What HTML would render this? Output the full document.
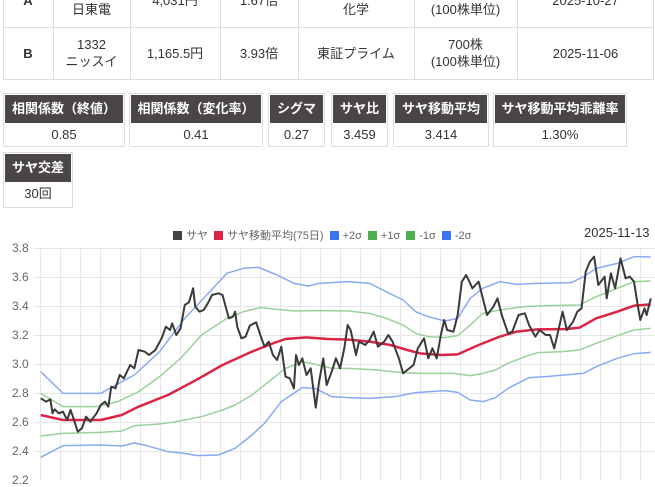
<!DOCTYPE html>
<html><head><meta charset="utf-8"><style>
body{margin:0;width:655px;height:480px;overflow:hidden;background:#fff;font-family:"Liberation Sans","Noto Sans CJK JP",sans-serif;color:#333;position:relative}
.a{position:absolute}
.t{position:absolute;border-collapse:collapse;font-size:13px}
.c{position:absolute;text-align:center;font-size:13px;line-height:17px;display:flex;align-items:center;justify-content:center;flex-direction:column}
.bx{position:absolute;border:1px solid #ddd;box-sizing:border-box;font-size:13px;text-align:center}
.bx .h{background:#4a4546;color:#fff;font-weight:bold;height:28px;line-height:28px;margin:1px 1px 0 1px;font-size:13px;white-space:nowrap}
.bx .v{line-height:24px}
.lg{font-size:11px;color:#666}
.lg i{display:inline-block;width:9px;height:9px;margin:0 4px 0 6px;vertical-align:-1px}
</style></head><body>
<!-- top table -->
<div class="a" style="left:3px;top:-2px;width:651px;height:82px;border:1px solid #ddd;border-top:none;box-sizing:border-box"></div>
<div class="a" style="left:3px;top:27px;width:651px;height:1px;background:#ddd"></div>
<div class="a" style="left:53px;top:0;width:1px;height:79px;background:#ddd"></div>
<div class="a" style="left:130px;top:0;width:1px;height:79px;background:#ddd"></div>
<div class="a" style="left:220px;top:0;width:1px;height:79px;background:#ddd"></div>
<div class="a" style="left:298px;top:0;width:1px;height:79px;background:#ddd"></div>
<div class="a" style="left:414px;top:0;width:1px;height:79px;background:#ddd"></div>
<div class="a" style="left:517px;top:0;width:1px;height:79px;background:#ddd"></div>
<div class="c" style="left:3px;top:-8px;width:50px;height:17px;font-weight:bold">A</div>
<div class="c" style="left:53px;top:-16px;width:77px;height:34px"><div>7751</div><div>日東電</div></div>
<div class="c" style="left:130px;top:-8px;width:90px;height:17px">4,031円</div>
<div class="c" style="left:220px;top:-8px;width:78px;height:17px">1.67倍</div>
<div class="c" style="left:298px;top:-16px;width:116px;height:34px"><div>&nbsp;</div><div>化学</div></div>
<div class="c" style="left:414px;top:-16px;width:103px;height:34px"><div>700株</div><div>(100株単位)</div></div>
<div class="c" style="left:517px;top:-8px;width:137px;height:17px">2025-10-27</div>
<div class="c" style="left:3px;top:27px;width:50px;height:52px;font-weight:bold">B</div>
<div class="c" style="left:53px;top:27px;width:77px;height:52px"><div>1332</div><div>ニッスイ</div></div>
<div class="c" style="left:130px;top:27px;width:90px;height:52px">1,165.5円</div>
<div class="c" style="left:220px;top:27px;width:78px;height:52px">3.93倍</div>
<div class="c" style="left:298px;top:27px;width:116px;height:52px">東証プライム</div>
<div class="c" style="left:414px;top:27px;width:103px;height:52px"><div>700株</div><div>(100株単位)</div></div>
<div class="c" style="left:517px;top:27px;width:137px;height:52px">2025-11-06</div>
<!-- stat boxes -->
<div class="bx" style="left:3px;top:93px;width:122px;height:54px"><div class="h">相関係数（終値）</div><div class="v">0.85</div></div>
<div class="bx" style="left:129px;top:93px;width:134px;height:54px"><div class="h">相関係数（変化率）</div><div class="v">0.41</div></div>
<div class="bx" style="left:268px;top:93px;width:57px;height:54px"><div class="h">シグマ</div><div class="v">0.27</div></div>
<div class="bx" style="left:331px;top:93px;width:57px;height:54px"><div class="h">サヤ比</div><div class="v">3.459</div></div>
<div class="bx" style="left:393px;top:93px;width:96px;height:54px"><div class="h">サヤ移動平均</div><div class="v">3.414</div></div>
<div class="bx" style="left:493px;top:93px;width:134px;height:54px"><div class="h">サヤ移動平均乖離率</div><div class="v">1.30%</div></div>
<div class="bx" style="left:3px;top:152px;width:70px;height:56px"><div class="h">サヤ交差</div><div class="v">30回</div></div>
<!-- legend -->
<div class="a lg" style="left:167px;top:227px;white-space:nowrap"><i style="background:#444"></i>サヤ<i style="background:#dc2446"></i>サヤ移動平均(75日)<i style="background:#3b73f5"></i>+2σ<i style="background:#4caf50"></i>+1σ<i style="background:#4caf50"></i>-1σ<i style="background:#3b73f5"></i>-2σ</div>
<div class="a" style="left:584px;top:225px;font-size:13px;color:#333">2025-11-13</div>
<!-- y labels -->
<div class="a" style="left:12px;top:241px;font-size:12px;color:#666;line-height:14px">
<div style="position:absolute;top:0">3.8</div><div style="position:absolute;top:29px">3.6</div><div style="position:absolute;top:58px">3.4</div><div style="position:absolute;top:87px">3.2</div><div style="position:absolute;top:116px">3.0</div><div style="position:absolute;top:145px">2.8</div><div style="position:absolute;top:174px">2.6</div><div style="position:absolute;top:203px">2.4</div><div style="position:absolute;top:232px">2.2</div></div>
<svg class="a" style="left:0;top:0" width="655" height="480">
<g stroke="#e6e6e6" stroke-width="1">
<line x1="34" y1="248.5" x2="655" y2="248.5"/><line x1="34" y1="277.5" x2="655" y2="277.5"/><line x1="34" y1="306.5" x2="655" y2="306.5"/><line x1="34" y1="335.5" x2="655" y2="335.5"/><line x1="34" y1="364.5" x2="655" y2="364.5"/><line x1="34" y1="393.5" x2="655" y2="393.5"/><line x1="34" y1="422.5" x2="655" y2="422.5"/><line x1="34" y1="451.5" x2="655" y2="451.5"/>
<line x1="40.5" y1="248" x2="40.5" y2="480"/><line x1="60.5" y1="248" x2="60.5" y2="480"/><line x1="80.5" y1="248" x2="80.5" y2="480"/><line x1="100.5" y1="248" x2="100.5" y2="480"/><line x1="120.5" y1="248" x2="120.5" y2="480"/><line x1="140.5" y1="248" x2="140.5" y2="480"/><line x1="160.5" y1="248" x2="160.5" y2="480"/><line x1="180.5" y1="248" x2="180.5" y2="480"/><line x1="200.5" y1="248" x2="200.5" y2="480"/><line x1="220.5" y1="248" x2="220.5" y2="480"/><line x1="240.5" y1="248" x2="240.5" y2="480"/><line x1="260.5" y1="248" x2="260.5" y2="480"/><line x1="280.5" y1="248" x2="280.5" y2="480"/><line x1="300.5" y1="248" x2="300.5" y2="480"/><line x1="320.5" y1="248" x2="320.5" y2="480"/><line x1="340.5" y1="248" x2="340.5" y2="480"/><line x1="360.5" y1="248" x2="360.5" y2="480"/><line x1="380.5" y1="248" x2="380.5" y2="480"/><line x1="400.5" y1="248" x2="400.5" y2="480"/><line x1="420.5" y1="248" x2="420.5" y2="480"/><line x1="440.5" y1="248" x2="440.5" y2="480"/><line x1="460.5" y1="248" x2="460.5" y2="480"/><line x1="480.5" y1="248" x2="480.5" y2="480"/><line x1="500.5" y1="248" x2="500.5" y2="480"/><line x1="520.5" y1="248" x2="520.5" y2="480"/><line x1="540.5" y1="248" x2="540.5" y2="480"/><line x1="560.5" y1="248" x2="560.5" y2="480"/><line x1="580.5" y1="248" x2="580.5" y2="480"/><line x1="600.5" y1="248" x2="600.5" y2="480"/><line x1="620.5" y1="248" x2="620.5" y2="480"/><line x1="640.5" y1="248" x2="640.5" y2="480"/>
</g></svg>
<svg class="a" style="left:0;top:215px" width="655" height="265" viewBox="0 0 1560 795" preserveAspectRatio="none">
<g fill="none" stroke-linejoin="round" vector-effect="non-scaling-stroke">
<polyline vector-effect="non-scaling-stroke" stroke="#8aa8f5" stroke-width="1.5" points="97,470 150,535 240,535 290,500 320,480 380,410 440,310 500,230 540,175 580,160 615,157 660,180 700,205 735,213 760,205 830,200 880,205 920,230 960,255 990,290 1020,305 1060,318 1090,310 1120,250 1150,220 1190,200 1230,208 1280,205 1360,203 1390,185 1420,160 1470,145 1510,125 1550,126"/>
<polyline vector-effect="non-scaling-stroke" stroke="#9bd09b" stroke-width="1.5" points="97,535 150,575 230,575 280,560 330,530 380,485 430,430 480,360 540,310 580,290 620,278 700,288 760,287 830,288 880,295 920,310 960,330 990,355 1020,365 1060,368 1090,362 1120,330 1150,295 1190,285 1250,275 1300,272 1380,270 1420,245 1470,220 1510,200 1550,198"/>
<polyline vector-effect="non-scaling-stroke" stroke="#9bd09b" stroke-width="1.5" points="97,663 150,655 240,652 290,648 320,632 380,627 420,620 480,605 530,585 560,570 600,540 640,500 680,460 720,440 760,450 790,460 830,460 900,465 950,472 1000,475 1080,475 1120,482 1150,475 1180,465 1210,445 1250,425 1280,413 1340,410 1380,405 1420,385 1470,362 1510,345 1550,340"/>
<polyline vector-effect="non-scaling-stroke" stroke="#8aa8f5" stroke-width="1.5" points="97,727 150,692 240,690 290,693 320,684 350,692 400,710 440,715 470,722 520,720 560,700 600,660 630,625 670,560 720,518 750,520 790,545 830,548 880,550 940,545 990,533 1060,527 1090,532 1120,555 1150,560 1180,548 1210,520 1260,488 1300,485 1360,478 1390,475 1420,455 1470,430 1510,416 1550,412"/>
<polyline vector-effect="non-scaling-stroke" stroke="#dc2446" stroke-width="2.5" points="97,600 150,615 240,615 290,600 330,575 400,540 460,500 530,450 600,410 650,385 680,372 730,367 780,372 830,374 880,380 930,390 970,405 1000,415 1050,420 1090,418 1140,390 1190,365 1230,350 1280,343 1350,342 1380,338 1420,310 1470,290 1510,272 1550,268"/>
<polyline vector-effect="non-scaling-stroke" stroke="#3a3a3a" stroke-width="2" points="97,550 110,560 120,553 125,595 130,583 140,595 150,590 160,615 168,585 175,610 185,650 195,640 205,605 215,620 230,595 240,570 250,560 258,575 265,515 275,520 285,480 295,490 310,450 320,460 330,405 345,410 355,420 370,405 385,370 395,335 405,345 410,325 420,360 430,340 440,270 450,262 460,220 465,275 475,290 485,285 495,265 505,240 520,235 530,240 545,310 555,305 560,290 565,335 575,370 585,365 595,332 610,322 620,360 630,395 640,380 650,420 660,435 670,395 680,485 690,490 700,520 705,420 712,450 720,430 730,480 740,460 752,578 760,500 770,430 778,510 790,470 800,430 810,460 820,400 828,330 835,345 848,420 855,380 870,390 880,375 890,350 900,395 915,380 925,360 935,380 950,430 960,475 970,465 985,450 995,400 1010,370 1020,430 1030,400 1040,430 1050,360 1058,315 1065,345 1080,350 1090,300 1100,200 1110,180 1118,200 1125,220 1140,200 1150,250 1160,300 1175,275 1185,250 1195,300 1210,355 1220,350 1235,300 1250,295 1260,330 1275,365 1285,345 1300,360 1310,360 1320,400 1340,290 1350,345 1365,320 1375,290 1385,280 1395,170 1405,140 1415,125 1425,210 1440,185 1445,250 1455,175 1465,220 1478,130 1490,190 1500,185 1510,200 1520,280 1525,315 1535,280 1540,300 1550,250"/>
</g></svg>
</body></html>
